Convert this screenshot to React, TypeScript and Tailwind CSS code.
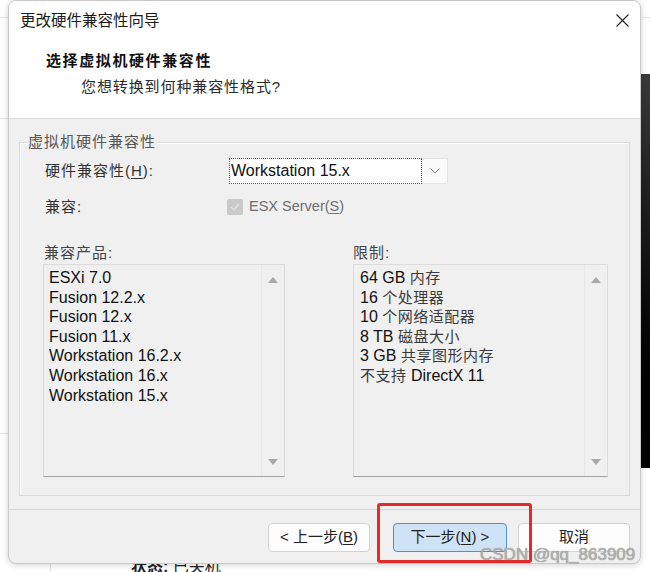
import React from "react";

const FONT = "font-['Liberation_Sans','Noto_Sans_CJK_SC',sans-serif]";

function Tri({ down }: { down?: boolean }) {
  return (
    <svg width="10" height="6" viewBox="0 0 10 6">
      <path d={down ? "M0 0 L10 0 L5 6 Z" : "M0 6 L10 6 L5 0 Z"} fill="#a8a8a8" />
    </svg>
  );
}

function ScrollCol() {
  return (
    <div className="flex w-[23px] shrink-0 flex-col items-center justify-between border-l border-[#e8e8e8] pb-[11px] pt-[12px]">
      <Tri />
      <Tri down />
    </div>
  );
}

function Cjk({ children }: { children: React.ReactNode }) {
  return <span className="text-[15px] tracking-[0.5px] text-[#3a3a3a]">{children}</span>;
}

const products = [
  "ESXi 7.0",
  "Fusion 12.2.x",
  "Fusion 12.x",
  "Fusion 11.x",
  "Workstation 16.2.x",
  "Workstation 16.x",
  "Workstation 15.x",
];

const limits: [string, string, boolean?][] = [
  ["64 GB", "内存"],
  ["16", "个处理器"],
  ["10", "个网络适配器"],
  ["8 TB", "磁盘大小"],
  ["3 GB", "共享图形内存"],
  ["DirectX 11", "不支持", true],
];

export default function App() {
  return (
    <div className={`relative h-[572px] w-[650px] overflow-hidden bg-white ${FONT}`}>
      {/* background app behind the dialog */}
      <div className="absolute left-0 top-[17px] h-px w-[9px] bg-[#e2e2e2]" />
      <div className="absolute left-0 top-[118px] h-px w-[9px] bg-[#e2e2e2]" />
      <div className="absolute left-0 top-[433px] h-px w-[9px] bg-[#e2e2e2]" />
      <div className="absolute left-[640px] top-[17px] h-px w-[10px] bg-[#e2e2e2]" />
      <div className="absolute left-[640px] top-[74px] h-[394px] w-[10px] bg-gradient-to-b from-[#3a3a3a] via-[#111] to-black" />
      <div className="absolute left-[50px] top-[560px] h-[12px] w-px bg-[#e2e2e2]" />
      <div className="absolute left-[131px] top-[556px] text-[16px] leading-[22px] text-[#222]">
        <span className="font-bold">状态:</span> 已关机
      </div>

      {/* dialog window */}
      <div className="absolute left-[8px] top-0 flex h-[564px] w-[633px] flex-col overflow-hidden rounded-[8px] border border-[#c9c9c9] bg-[#f0f0f0] shadow-[0_1px_6px_rgba(0,0,0,0.18)]">
        {/* title bar */}
        <div className="flex h-[39px] shrink-0 items-center justify-between bg-white pl-[11px] pr-[11px]">
          <span className="text-[15.5px] text-[#1b1b1b]">更改硬件兼容性向导</span>
          <svg width="13" height="13" viewBox="0 0 13 13">
            <path d="M0.5 0.5 L12.5 12.5 M12.5 0.5 L0.5 12.5" stroke="#222" strokeWidth="1.1" />
          </svg>
        </div>

        {/* header */}
        <div className="flex h-[79px] shrink-0 flex-col border-b border-[#dcdcdc] bg-white pl-[37px] pt-[11px]">
          <div className="text-[15px] font-bold leading-[20px] tracking-[1.6px] text-[#111]">选择虚拟机硬件兼容性</div>
          <div className="ml-[35px] mt-[6px] text-[15px] leading-[20px] tracking-[0.9px] text-[#2a2a2a]">
            您想转换到何种兼容性格式?
          </div>
        </div>

        {/* body */}
        <div className="flex h-[390px] shrink-0 flex-col px-[10px] pt-[23px]">
          <div className="relative flex h-[354px] flex-col border border-[#d9d9d9] pl-[23px] pt-[15px] shadow-[inset_1px_1px_0_#ffffff]">
            <span className="absolute left-[7px] top-[-11px] bg-[#f0f0f0] px-px text-[15px] leading-[20px] tracking-[1px] text-[#555]">
              虚拟机硬件兼容性
            </span>

            {/* row 1 */}
            <div className="flex h-[26px] items-center">
              <span className="w-[186px] pl-[2px] text-[15px] tracking-[1px] text-[#333]">
                硬件兼容性(<span className="underline underline-offset-2">H</span>):
              </span>
              <div className="flex h-[26px] w-[219px] items-stretch">
                <div className="flex flex-1 items-center border border-dotted border-[#555] bg-white pl-[1px] text-[16px] text-[#111]">
                  Workstation 15.x
                </div>
                <div className="flex w-[26px] items-center justify-center border border-l-0 border-[#e4e4e4] bg-[#fafafa]">
                  <svg width="10" height="6" viewBox="0 0 10 6">
                    <path d="M0.5 0.5 L5 5 L9.5 0.5" stroke="#8a8a8a" strokeWidth="1" fill="none" />
                  </svg>
                </div>
              </div>
            </div>

            {/* row 2 */}
            <div className="mt-[10px] flex h-[26px] items-center">
              <span className="w-[184px] pl-[2px] text-[15px] tracking-[1px] text-[#333]">兼容:</span>
              <div className="flex h-[16px] w-[16px] items-center justify-center rounded-[2px] bg-[#c9c9c9]">
                <svg width="10" height="8" viewBox="0 0 10 8">
                  <path d="M1 4 L4 7 L9 1" stroke="#e2e2e2" strokeWidth="1.3" fill="none" />
                </svg>
              </div>
              <span className="ml-[6px] text-[14.5px] text-[#6d6d6d]">
                ESX Server(<span className="underline underline-offset-2">S</span>)
              </span>
            </div>

            {/* list titles */}
            <div className="mt-[23px] flex h-[20px] items-center">
              <span className="w-[310px] pl-[1px] text-[15px] tracking-[1px] text-[#444]">兼容产品:</span>
              <span className="text-[15px] tracking-[1px] text-[#444]">限制:</span>
            </div>

            {/* lists */}
            <div className="mt-[1px] flex gap-[68px]">
              <div className="flex h-[213px] w-[242px] border border-[#dcdcdc] border-b-[#a3a3a3]">
                <div className="flex-1 pl-[5px] pt-[3px] text-[16px] leading-[19.6px] text-[#111]">
                  {products.map((p) => (
                    <div key={p}>{p}</div>
                  ))}
                </div>
                <ScrollCol />
              </div>
              <div className="flex h-[213px] w-[255px] border border-[#dcdcdc] border-b-[#a3a3a3]">
                <div className="flex-1 pl-[6px] pt-[3px] text-[16px] leading-[19.6px] text-[#111]">
                  {limits.map(([a, b, rev]) => (
                    <div key={a}>
                      {rev ? (
                        <>
                          <Cjk>{b}</Cjk> {a}
                        </>
                      ) : (
                        <>
                          {a} <Cjk>{b}</Cjk>
                        </>
                      )}
                    </div>
                  ))}
                </div>
                <ScrollCol />
              </div>
            </div>
          </div>
        </div>

        {/* footer */}
        <div className="flex flex-1 items-start justify-end border-t border-[#d6d6d6] pr-[10px] pt-[13px]">
          <button className="flex h-[29px] w-[102px] items-center justify-center rounded-[4px] border border-[#d3d3d3] bg-[#fdfdfd] text-[15px] text-[#222]">
            &lt; 上一步(<span className="underline underline-offset-2">B</span>)
          </button>
          <button className="ml-[23px] flex h-[29px] w-[114px] items-center justify-center rounded-[4px] border border-[#4f8fd6] bg-[#cfe3f6] text-[15px] text-[#222]">
            下一步(<span className="underline underline-offset-2">N</span>) &gt;
          </button>
          <button className="ml-[11px] flex h-[29px] w-[112px] items-center justify-center rounded-[4px] border border-[#d3d3d3] bg-[#fdfdfd] text-[15px] text-[#222]">
            取消
          </button>
        </div>
      </div>

      {/* annotation overlay */}
      <div className="absolute left-[377px] top-[503px] h-[60px] w-[155px] rounded-[3px] border-[3px] border-[#e42a2a]" />
      <div className="absolute left-[480px] top-[544px] text-[17px] leading-[22px] text-[#b3b3b3] [text-shadow:0_0_1px_#777]">
        CSDN @qq_863909
      </div>
    </div>
  );
}
